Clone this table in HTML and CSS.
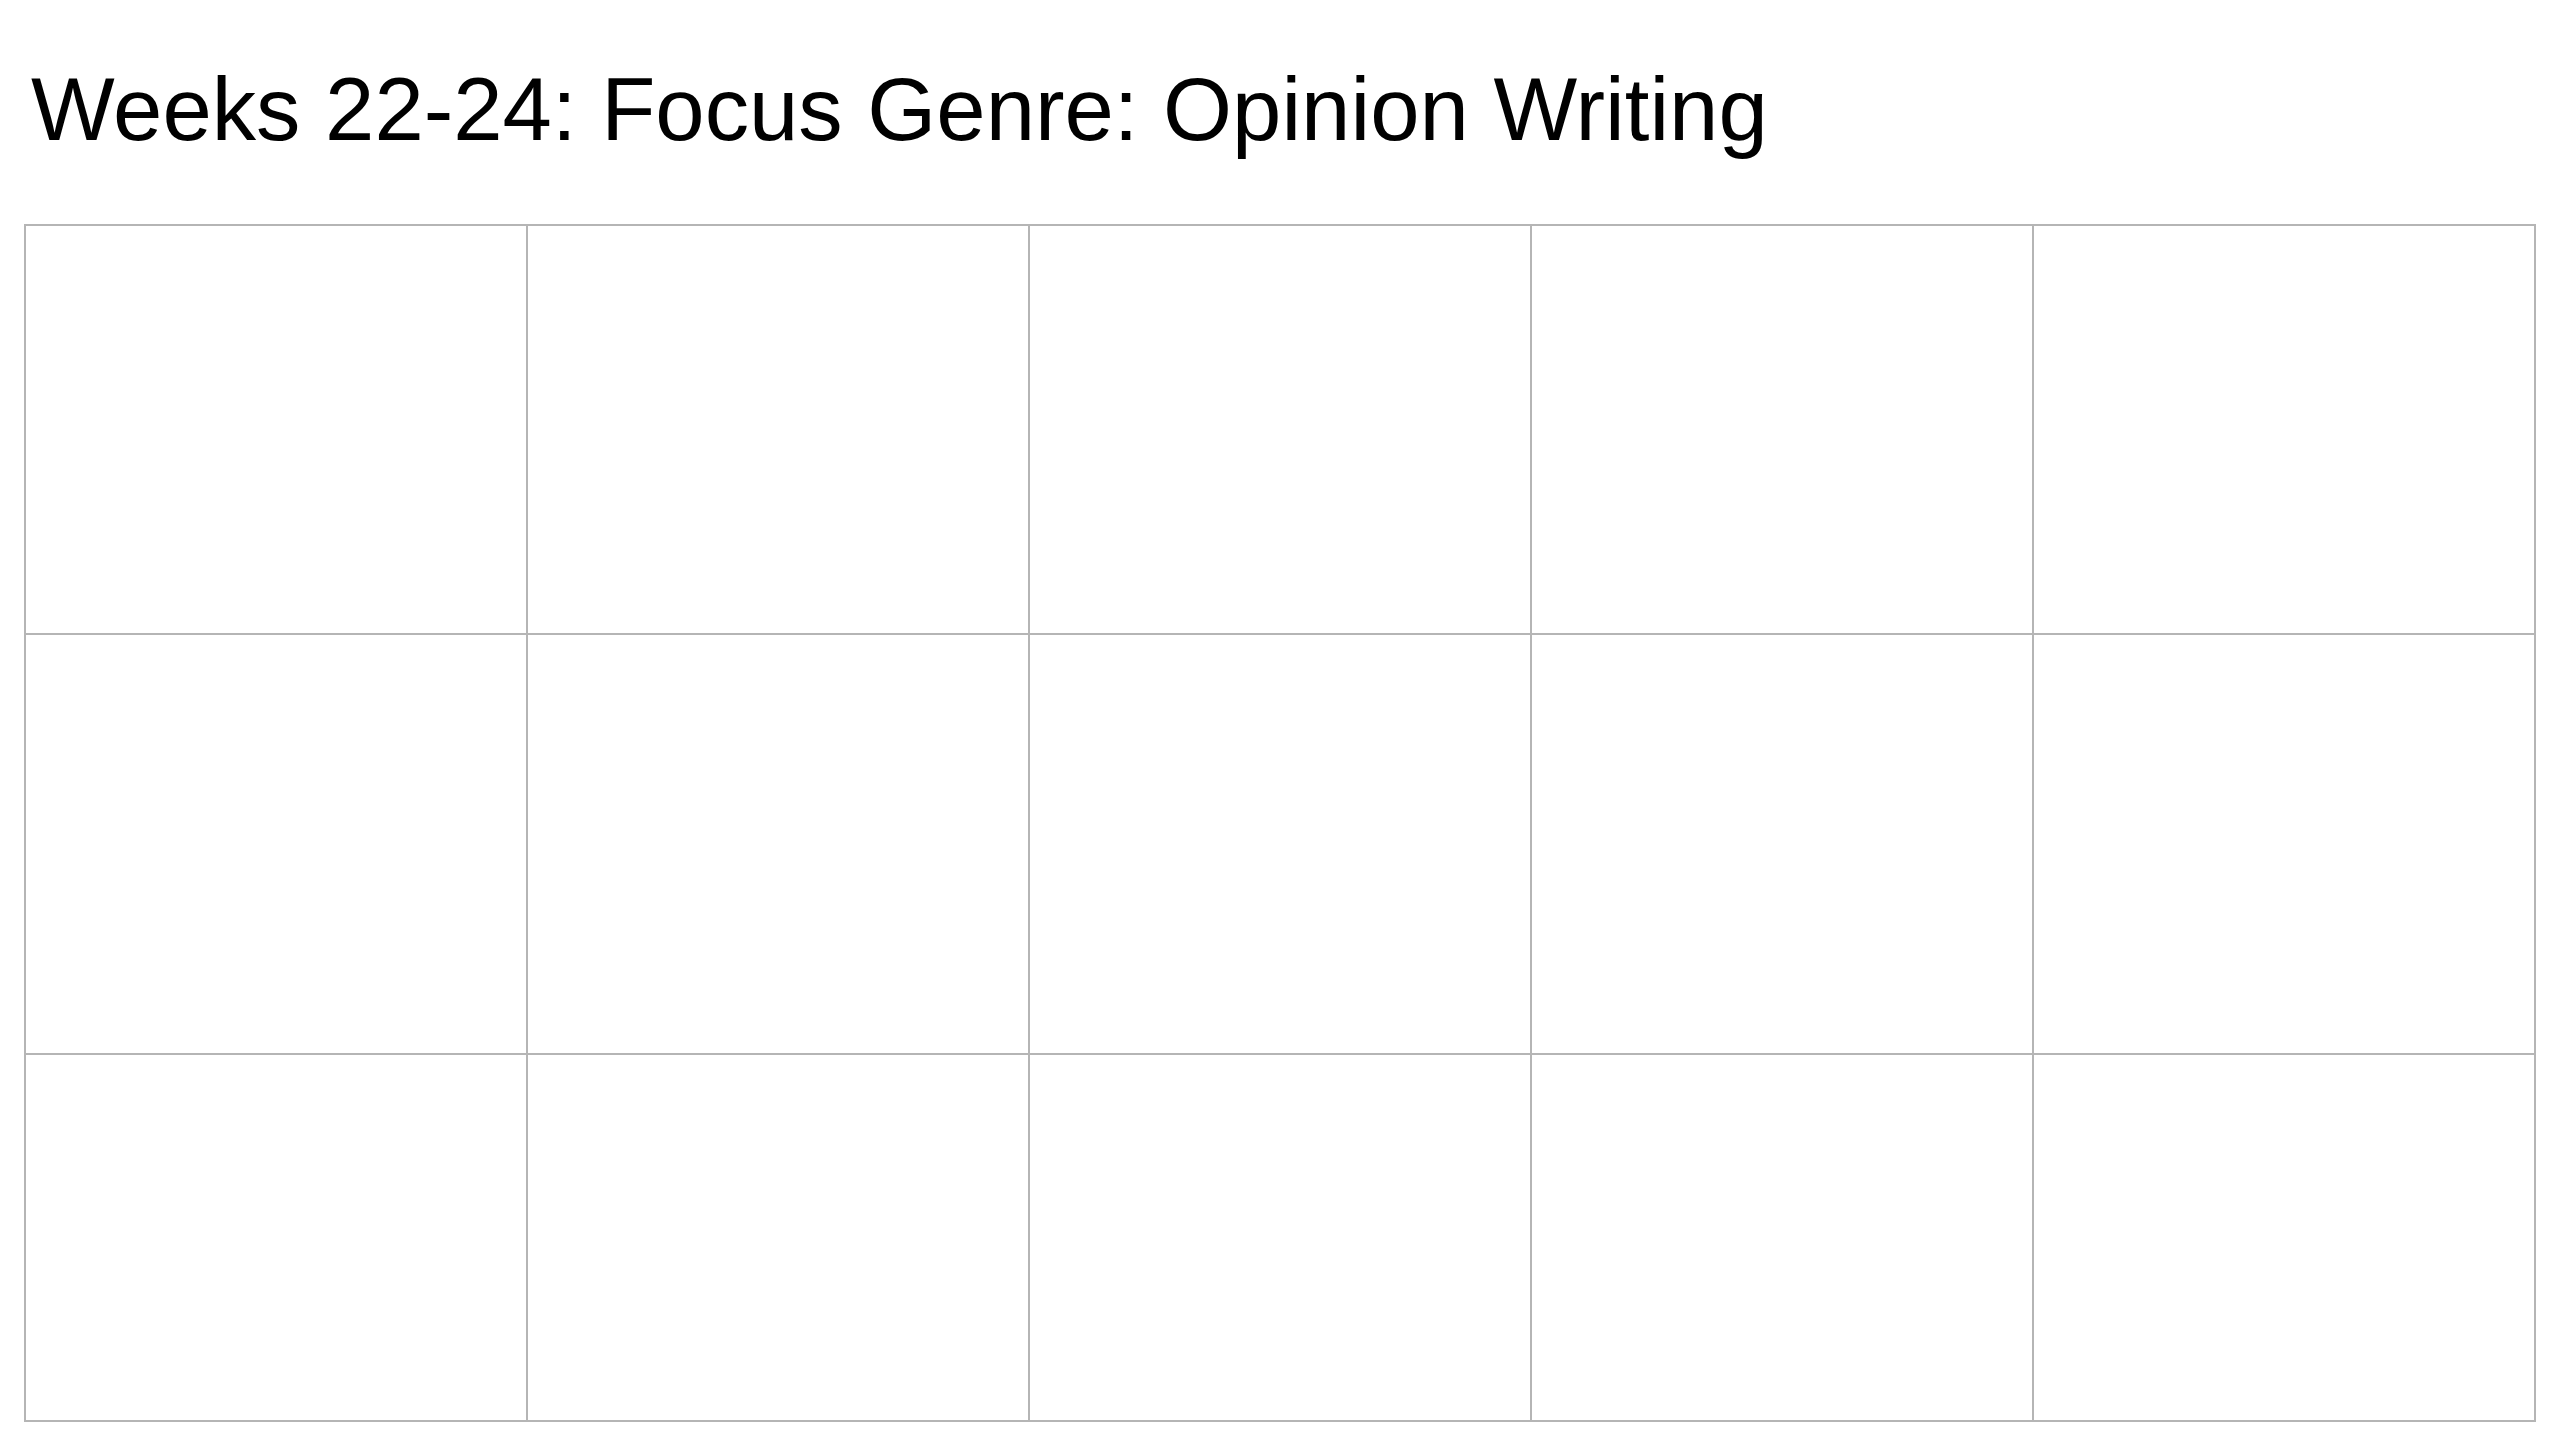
FILE: index.html
```html
<!DOCTYPE html>
<html lang="en">
<head>
<meta charset="utf-8">
<title>Weeks 22-24: Focus Genre: Opinion Writing</title>
<link rel="stylesheet" href="styles.css">
</head>
<body>
<main class="page">
  <h1 class="title">Weeks 22-24: Focus Genre: Opinion Writing</h1>
  <div class="grid">
    <div class="cell row-1"></div><div class="cell row-1"></div><div class="cell row-1"></div><div class="cell row-1"></div><div class="cell row-1"></div>
    <div class="cell row-2"></div><div class="cell row-2"></div><div class="cell row-2"></div><div class="cell row-2"></div><div class="cell row-2"></div>
    <div class="cell row-3"></div><div class="cell row-3"></div><div class="cell row-3"></div><div class="cell row-3"></div><div class="cell row-3"></div>
  </div>
</main>
</body>
</html>
```

FILE: styles.css
```css
html, body {
  margin: 0;
  padding: 0;
  background: #ffffff;
}

.page {
  padding: 0 24px;
  font-family: "Liberation Sans", Arial, sans-serif;
  color: #000000;
}

.title {
  margin: 65px 0 0 7px;
  font-size: 88.7px;
  line-height: 89px;
  font-weight: normal;
  white-space: nowrap;
}

.grid {
  margin-top: 70px;
  width: 2510px;
  display: grid;
  grid-template-columns: repeat(5, 502px);
  grid-template-rows: 409px 420px 367px;
  border-left: 2px solid #b5b5b5;
  border-top: 2px solid #b5b5b5;
  box-sizing: content-box;
}

.cell {
  border-right: 2px solid #b5b5b5;
  border-bottom: 2px solid #b5b5b5;
  box-sizing: border-box;
}
```
